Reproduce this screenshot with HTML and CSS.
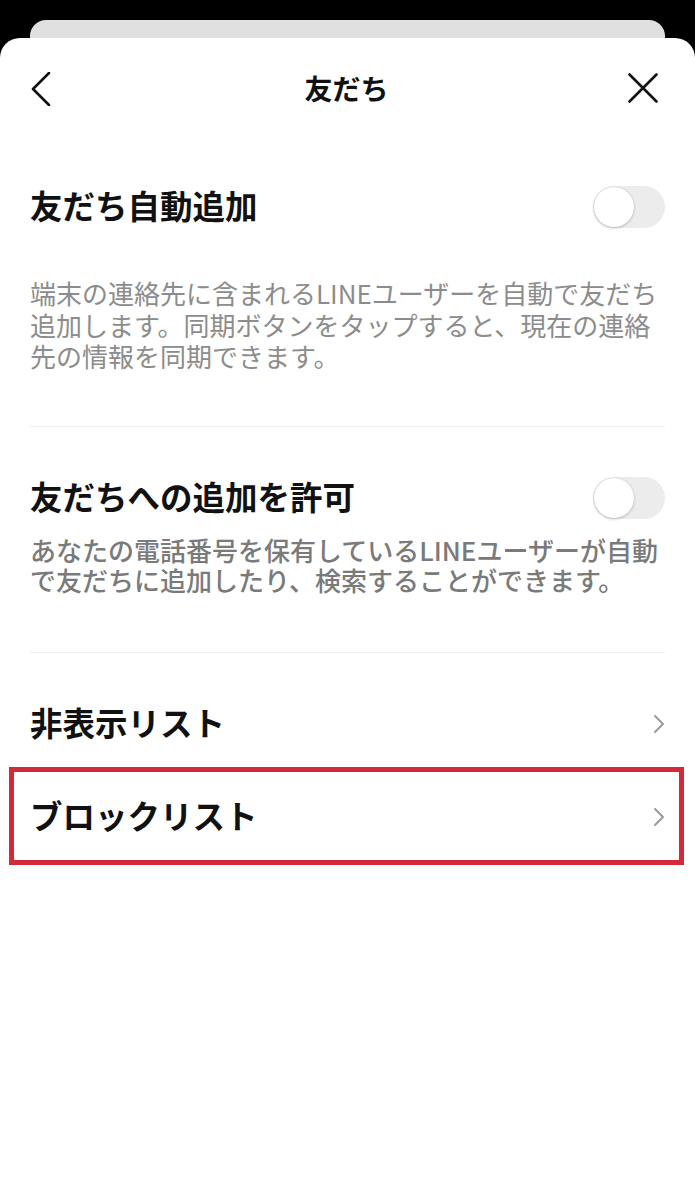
FILE: index.html
```html
<!DOCTYPE html>
<html lang="ja">
<head>
<meta charset="utf-8">
<link rel="stylesheet" href="styles.css">
</head>
<body>
<div class="back-card"></div>
<div class="sheet">
  <header class="header">
    <svg class="icon-back" width="20" height="34" viewBox="0 0 20 34"><path d="M18 1 L2 17 L18 33" fill="none" stroke="#111" stroke-width="2.6" stroke-linecap="round" stroke-linejoin="round"/></svg>
    <div class="title">友だち</div>
    <svg class="icon-close" width="30" height="30" viewBox="0 0 30 30"><path d="M1.5 1.5 L28.5 28.5 M28.5 1.5 L1.5 28.5" fill="none" stroke="#111" stroke-width="2.6" stroke-linecap="round"/></svg>
  </header>

  <section class="section s1">
    <div class="row">
      <div class="heading">友だち自動追加</div>
      <div class="toggle"><span class="knob"></span></div>
    </div>
    <p class="desc light">端末の連絡先に含まれるLINEユーザーを自動で友だち追加します。同期ボタンをタップすると、現在の連絡先の情報を同期できます。</p>
  </section>
  <div class="divider"></div>

  <section class="section s2">
    <div class="row">
      <div class="heading">友だちへの追加を許可</div>
      <div class="toggle"><span class="knob"></span></div>
    </div>
    <p class="desc medium">あなたの電話番号を保有しているLINEユーザーが自動で友だちに追加したり、検索することができます。</p>
  </section>
  <div class="divider"></div>

  <div class="link-row first">
    <div class="heading">非表示リスト</div>
    <svg class="chev" width="12" height="20" viewBox="0 0 12 20"><path d="M2 2 L10 10 L2 18" fill="none" stroke="#9a9a9a" stroke-width="2" stroke-linecap="round" stroke-linejoin="round"/></svg>
  </div>
  <div class="link-row highlighted">
    <div class="heading">ブロックリスト</div>
    <svg class="chev" width="12" height="20" viewBox="0 0 12 20"><path d="M2 2 L10 10 L2 18" fill="none" stroke="#9a9a9a" stroke-width="2" stroke-linecap="round" stroke-linejoin="round"/></svg>
  </div>
</div>
</body>
</html>
```
FILE: styles.css
```css
* { box-sizing: border-box; }
html, body { margin: 0; padding: 0; }
body {
  background: #000;
  font-family: "Noto Sans CJK JP", "Noto Sans", sans-serif;
  color: #111;
  width: 695px;
  height: 1200px;
  overflow: hidden;
}
.back-card {
  margin: 20px 30px 0;
  height: 18px;
  background: #e0e0e0;
  border-radius: 16px 16px 0 0;
}
.sheet {
  background: #fff;
  border-radius: 20px 20px 0 0;
  height: 1162px;
}
.header {
  height: 104px;
  display: flex;
  align-items: center;
  justify-content: space-between;
  padding: 0 37px 2px 31px;
}
.icon-back { display: block; }
.icon-close { display: block; margin-top: -2px; }
.title {
  font-size: 28px;
  font-weight: 700;
  line-height: 40px;
  margin-left: 14px;
  padding-bottom: 2px;
}
.section {
  padding: 0 30px;
}
.s1 { padding-top: 43px; padding-bottom: 54px; }
.s2 { padding-top: 49px; padding-bottom: 57px; }
.row {
  display: flex;
  align-items: center;
  justify-content: space-between;
  height: 44px;
}
.heading {
  font-size: 32.5px;
  font-weight: 700;
  line-height: 40px;
  padding-bottom: 4px;
  color: #111;
}
.toggle {
  width: 72px;
  height: 42px;
  border-radius: 21px;
  background: #ececec;
  position: relative;
}
.knob {
  position: absolute;
  left: 1px;
  top: 1px;
  width: 40px;
  height: 40px;
  border-radius: 50%;
  background: #fff;
  box-shadow: 0 1px 3px rgba(0,0,0,0.22), 0 0 1px rgba(0,0,0,0.15);
}
.desc {
  margin: 0;
  font-size: 26px;
}
.desc.light {
  margin-top: 48px;
  line-height: 31.5px;
  color: #8c8c8c;
  font-weight: 400;
}
.desc.medium {
  margin-top: 15px;
  line-height: 30px;
  color: #7a7a7a;
  font-weight: 500;
}
.divider {
  height: 1px;
  background: #efefef;
  margin: 0 30px;
}
.link-row {
  display: flex;
  align-items: center;
  justify-content: space-between;
}
.link-row.first {
  margin-top: 49px;
  padding: 0 30px;
  height: 44px;
}
.link-row.highlighted {
  margin: 21px 11px 0 9px;
  border: 5px solid #d22a3a;
  padding: 23px 14px 21px 16px;
}
.chev { display: block; }
```
